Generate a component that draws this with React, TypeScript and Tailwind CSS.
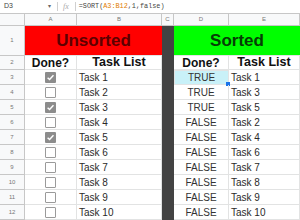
const LEFT = [
  { done: true, task: "Task 1" },
  { done: false, task: "Task 2" },
  { done: true, task: "Task 3" },
  { done: false, task: "Task 4" },
  { done: true, task: "Task 5" },
  { done: false, task: "Task 6" },
  { done: false, task: "Task 7" },
  { done: false, task: "Task 8" },
  { done: false, task: "Task 9" },
  { done: false, task: "Task 10" },
];

const RIGHT = [
  { done: "TRUE", task: "Task 1" },
  { done: "TRUE", task: "Task 3" },
  { done: "TRUE", task: "Task 5" },
  { done: "FALSE", task: "Task 2" },
  { done: "FALSE", task: "Task 4" },
  { done: "FALSE", task: "Task 6" },
  { done: "FALSE", task: "Task 7" },
  { done: "FALSE", task: "Task 8" },
  { done: "FALSE", task: "Task 9" },
  { done: "FALSE", task: "Task 10" },
];

function Checkbox({ checked }: { checked: boolean }) {
  if (checked) {
    return (
      <div className="w-[11px] h-[11px] rounded-[1px] bg-[#8c8c8c] flex items-center justify-center">
        <svg width="9" height="9" viewBox="0 0 10 10">
          <path d="M1.8 5.2 L4 7.3 L8.3 2.6" stroke="#fff" strokeWidth="1.6" fill="none" />
        </svg>
      </div>
    );
  }
  return <div className="w-[11px] h-[11px] rounded-[1px] border-[1.5px] border-[#9a9a9a] bg-white" />;
}

const cell = "border-b border-r border-[#e2e3e3]";
const rowHead = "bg-[#f8f9fa] border-b border-r border-[#c7c7c7] flex items-center justify-center text-[6px] text-[#777]";

export default function App() {
  return (
    <div className="w-[300px] h-[220px] overflow-hidden bg-white" style={{ fontFamily: '"Liberation Sans", Arial, sans-serif' }}>
      {/* Formula bar */}
      <div className="h-[14px] flex items-center border-b border-[#c7c7c7] text-[#444]">
        <span className="pl-[4px] w-[48px] text-[7px]">D3</span>
        <span className="text-[6px] text-[#666]">▾</span>
        <span className="ml-[6px] w-px h-[9px] bg-[#d0d0d0]" />
        <span className="ml-[5px] text-[8px] italic text-[#aaa]" style={{ fontFamily: '"Liberation Serif", serif' }}>fx</span>
        <span className="ml-[6px] w-px h-[9px] bg-[#d0d0d0]" />
        <span className="ml-[3px] text-[6.8px] whitespace-nowrap" style={{ fontFamily: '"Liberation Mono", monospace' }}>
          =SORT(<span className="text-[#e07b00]">A3:B12</span>,1,false)
        </span>
      </div>

      {/* Grid */}
      <div className="grid grid-cols-[25px_52px_85px_12px_55px_71px] grid-rows-[12px_30px_14px_repeat(10,15px)]">
        {/* column headers */}
        <div className={rowHead} />
        <div className={rowHead}>A</div>
        <div className={rowHead}>B</div>
        <div className={rowHead}>C</div>
        <div className={`${rowHead} bg-[#e8eaed]`}>D</div>
        <div className={rowHead}>E</div>

        {/* row 1 */}
        <div className={rowHead}>1</div>
        <div className="col-span-2 bg-[#ff0000] flex items-center justify-center border-b border-[#e2e3e3] text-[17px] font-bold text-[#5c0000]">
          Unsorted
        </div>
        <div className="row-span-12 bg-[#434343]" />
        <div className="col-span-2 bg-[#00ff00] flex items-center justify-center border-b border-[#e2e3e3] text-[17px] font-bold text-[#063d06]">
          Sorted
        </div>

        {/* row 2 */}
        <div className={rowHead}>2</div>
        <div className={`${cell} flex items-center justify-center text-[12px] font-bold text-[#111]`}>Done?</div>
        <div className={`${cell} flex items-center justify-center text-[12.5px] font-bold text-[#111]`}>Task List</div>
        <div className={`${cell} flex items-center justify-center text-[12px] font-bold text-[#111]`}>Done?</div>
        <div className={`${cell} flex items-center justify-center text-[12.5px] font-bold text-[#111]`}>Task List</div>

        {LEFT.map((l, i) => {
          const r = RIGHT[i];
          const selected = i === 0;
          return [
            <div key={`h${i}`} className={`${rowHead} ${selected ? "bg-[#e8eaed]" : ""}`}>{i + 3}</div>,
            <div key={`a${i}`} className={`${cell} flex items-center justify-center`}>
              <Checkbox checked={l.done} />
            </div>,
            <div key={`b${i}`} className={`${cell} flex items-center pl-[2px] text-[10px] text-[#2a2a2a]`}>{l.task}</div>,
            <div
              key={`d${i}`}
              className={`${cell} relative flex items-center justify-center text-[10px] text-[#333] ${selected ? "bg-[#c9f1f8] border border-[#5b9bd5]" : ""}`}
            >
              {r.done}
              {selected && <span className="absolute -right-[2px] -bottom-[2px] w-[4px] h-[4px] bg-[#1a73e8]" />}
            </div>,
            <div key={`e${i}`} className={`${cell} flex items-center pl-[2px] text-[10px] text-[#2a2a2a]`}>{r.task}</div>,
          ];
        })}
      </div>
    </div>
  );
}
